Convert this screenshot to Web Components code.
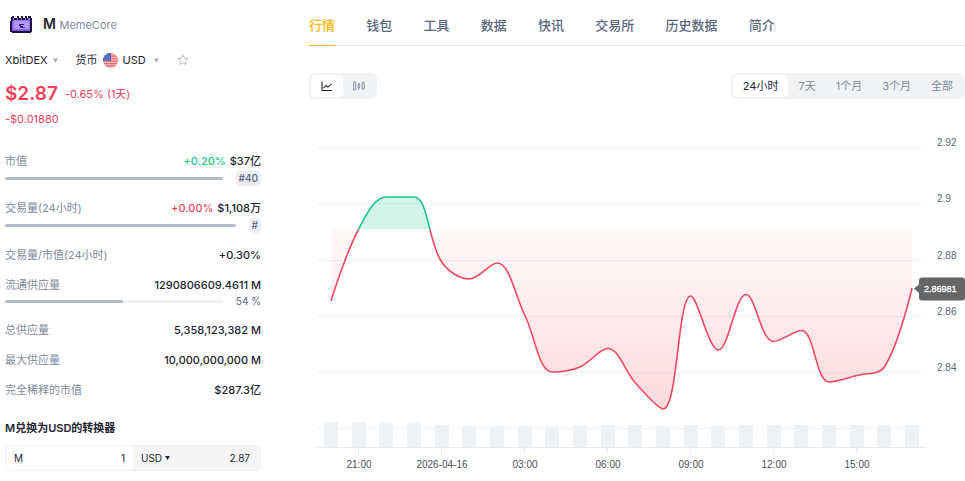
<!DOCTYPE html>
<html lang="zh-CN">
<head>
<meta charset="utf-8">
<meta name="viewport" content="width=device-width, initial-scale=1">
<title>MemeCore (M)</title>
<style>
  body {
    margin: 0;
    background: #fff;
    color: #222531;
    font-family: Inter, "Noto Sans CJK SC", sans-serif;
    font-size: 11px;
    line-height: 16px;
  }
</style>
</head>
<body>
<coin-page>
  <coin-title slot="side" symbol="M">MemeCore</coin-title>
  <market-picker slot="side"></market-picker>
  <coin-price slot="side" price="$2.87" percent="-0.65% (1天)" change="-$0.01880"></coin-price>
  <stat-list slot="side">
    <stat-row label="市值" delta="+0.20%" trend="up" bar="100" badge="#40">$37亿</stat-row>
    <stat-row label="交易量(24小时)" delta="+0.00%" trend="down" bar="100" badge="#">$1,108万</stat-row>
    <stat-row label="交易量/市值(24小时)">+0.30%</stat-row>
    <stat-row label="流通供应量" bar="54" note="54 %">1290806609.4611 M</stat-row>
    <stat-row label="总供应量">5,358,123,382 M</stat-row>
    <stat-row label="最大供应量">10,000,000,000 M</stat-row>
    <stat-row label="完全稀释的市值">$287.3亿</stat-row>
  </stat-list>
  <coin-converter slot="side" rate="2.87"></coin-converter>

  <tab-bar>
    <a href="#market" aria-current="page">行情</a>
    <a href="#wallet">钱包</a>
    <a href="#tools">工具</a>
    <a href="#data">数据</a>
    <a href="#news">快讯</a>
    <a href="#exchange">交易所</a>
    <a href="#history">历史数据</a>
    <a href="#about">简介</a>
  </tab-bar>
  <chart-toolbar></chart-toolbar>
  <price-chart></price-chart>
</coin-page>

<script>
function attach(el, html) {
  const root = el.attachShadow({ mode: 'open' });
  root.innerHTML = html;
  return root;
}

const CARET = '<svg class="caret" viewBox="0 0 6 5" aria-hidden="true"><path d="M0 0h6L3 5z" fill="currentColor"/></svg>';

class CoinPage extends HTMLElement {
  constructor() {
    super();
    attach(this, `
    <style>
      :host {
        display: grid;
        grid-template-columns: 256px minmax(0, 1fr);
        column-gap: 48px;
        padding-left: 5px;
      }
      aside, main { min-width: 0; }
    </style>
    <aside><slot name="side"></slot></aside>
    <main><slot></slot></main>`);
  }
}

class CoinTitle extends HTMLElement {
  connectedCallback() {
    if (this.shadowRoot) return;
    attach(this, `
    <style>
      :host { display: flex; align-items: center; gap: 11px; padding: 12px 0 0 5px; height: 24px; }
      svg { width: 22px; height: 19px; flex: none; }
      h1 { margin: 0; font-size: 14px; line-height: 22px; font-weight: 600; }
      span { font-size: 11px; font-weight: 400; color: #808a9d; }
    </style>
    <svg viewBox="0 0 22 19" shape-rendering="crispEdges" aria-hidden="true">
      <path d="M2 1h2v2h3V1h2v2h2V1h2v2h2V1h2v2h1V1h3v2h1v14h-1v1H2v-1H0V6h1V2h1z" fill="#1b1140"/>
      <path d="M3 3h1v2h3V3h1v2h3V3h1v2h3V3h1v2h2V3h2v13H2V6h1z" fill="#8f6cf0"/>
      <path d="M4 6h15v8H4z" fill="#b095ff"/>
      <path d="M3 15h17v1H3z" fill="#7550dc"/>
      <path d="M10 9h4v1h-3v1h2v1h-2v1h3v0h-4z" fill="#2d1a68"/>
      <path d="M9 9h1v4h5v-1h-5z" fill="#4c329b"/>
    </svg>
    <h1>${this.getAttribute('symbol')} <span><slot></slot></span></h1>`);
  }
}

class MarketPicker extends HTMLElement {
  constructor() {
    super();
    attach(this, `
    <style>
      :host { display: flex; align-items: center; height: 24px; margin-top: 12px; }
      label { display: flex; align-items: center; gap: 5px; }
      .currency { margin-left: 18px; }
      select {
        appearance: none;
        field-sizing: content;
        margin: 0;
        padding: 0;
        border: 0;
        background: none;
        color: inherit;
        font: inherit;
        cursor: pointer;
      }
      .flag { width: 15px; height: 15px; }
      .caret { width: 5px; height: 5px; color: #a1a7b3; }
      .currency select { padding-right: 3px; }
      button { display: flex; margin: 0 0 0 18px; padding: 0; border: 0; background: none; cursor: pointer; }
      .star { width: 12px; height: 12px; }
    </style>
    <label>
      <select aria-label="交易所"><option>XbitDEX</option></select>${CARET}
    </label>
    <label class="currency">
      <span>货币</span>
      <svg class="flag" viewBox="0 0 15 15" aria-hidden="true">
        <clipPath id="round"><circle cx="7.5" cy="7.5" r="7.5"/></clipPath>
        <g clip-path="url(#round)">
          <path d="M0 0h15v15H0z" fill="#f3c8cb"/>
          <path d="M0 .5h15M0 3h15M0 5.5h15M0 8h15M0 10.5h15M0 13h15" stroke="#ee6b72" stroke-width="1.4"/>
          <path d="M0 0h8v8H0z" fill="#4a66b5"/>
          <path d="M1 3h6M1 5h6M1 7h6" stroke="#b4c0e2" stroke-width=".6" stroke-dasharray=".7 1"/>
        </g>
      </svg>
      <select><option>USD</option><option>EUR</option><option>CNY</option></select>${CARET}
    </label>
    <button type="button" aria-label="收藏">
      <svg class="star" viewBox="0 0 12 12" aria-hidden="true">
        <path d="M6 1l1.5 3.2 3.5.5-2.5 2.4.6 3.5L6 8.9l-3.1 1.7.6-3.500L1 4.700l3.500-.5z" fill="none" stroke="#b4b8c0" stroke-linejoin="round"/>
      </svg>
    </button>`);
  }
}

class CoinPrice extends HTMLElement {
  connectedCallback() {
    if (this.shadowRoot) return;
    attach(this, `
    <style>
      :host { display: block; margin-top: 8px; color: #f03f58; }
      div { display: flex; align-items: center; gap: 7px; }
      strong { font-size: 19px; line-height: 28px; font-weight: 600; }
      p { margin: 3px 0 1px; }
    </style>
    <div><strong>${this.getAttribute('price')}</strong><span>${this.getAttribute('percent')}</span></div>
    <p>${this.getAttribute('change')}</p>`);
  }
}

class StatList extends HTMLElement {
  constructor() {
    super();
    attach(this, `
    <style>
      :host { display: flex; flex-direction: column; gap: 14px; margin-top: 26px; }
    </style>
    <slot></slot>`);
  }
}

class StatRow extends HTMLElement {
  connectedCallback() {
    if (this.shadowRoot) return;
    const get = name => this.getAttribute(name) || '';
    const badge = get('badge');
    const tag = badge ? `<b>${badge}</b>` : `<small>${get('note')}</small>`;
    attach(this, `
    <style>
      :host { display: block; }
      .line { display: flex; justify-content: space-between; gap: 8px; }
      .label { color: #808a9d; }
      .value { font-weight: 500; }
      .up { color: #16c784; }
      .down { color: #f03f58; }
      .up, .down { margin-right: 1px; }
      .meter { display: flex; align-items: center; gap: 13px; height: 16px; margin-top: 1px; }
      .meter.plain { height: 14px; }
      .track { flex: 1; height: 3px; border-radius: 2px; background: #eff2f5; overflow: hidden; }
      .fill { height: 100%; background: #b5bbc9; }
      b {
        padding: 0 3px;
        border-radius: 4px;
        background: #eceef2;
        color: #58667e;
        font-size: 10px;
        line-height: 15px;
        font-weight: 500;
      }
      small { color: #58667e; font-size: 10px; line-height: 14px; }
    </style>
    <div class="line">
      <span class="label">${get('label')}</span>
      <span class="value">${get('delta') ? `<span class="${get('trend')}">${get('delta')}</span> ` : ''}<slot></slot></span>
    </div>
    ${get('bar') ? `<div class="meter ${badge ? '' : 'plain'}">
      <div class="track"><div class="fill" style="width:${get('bar')}%"></div></div>${tag}
    </div>` : ''}`);
  }
}

class CoinConverter extends HTMLElement {
  connectedCallback() {
    if (this.shadowRoot) return;
    const rate = Number(this.getAttribute('rate'));
    const root = attach(this, `
    <style>
      :host { display: block; margin-top: 22px; }
      h2 { margin: 0 0 9px; font-size: 11px; line-height: 16px; font-weight: 600; }
      .box {
        display: grid;
        grid-template-columns: 1fr 1fr;
        box-sizing: border-box;
        height: 26px;
        border: 1px solid #eff2f5;
        border-radius: 4px;
        overflow: hidden;
        font-size: 10px;
      }
      .side { display: flex; align-items: center; gap: 3px; padding: 0 8px; min-width: 0; }
      .to { background: #f5f5f6; padding-right: 10px; }
      input, select { margin: 0; padding: 0; border: 0; background: none; color: inherit; font: inherit; }
      select { appearance: none; field-sizing: content; }
      input { flex: 1; min-width: 0; text-align: right; outline: 0; }
      .caret { width: 5px; height: 4px; }
    </style>
    <h2>M兑换为USD的转换器</h2>
    <div class="box">
      <div class="side"><label for="from">M</label><input id="from" value="1" inputmode="decimal"></div>
      <div class="side to">
        <select aria-label="货币"><option>USD</option></select>${CARET}
        <input id="to" aria-label="USD" value="${rate}" inputmode="decimal">
      </div>
    </div>`);
    const from = root.querySelector('#from');
    const to = root.querySelector('#to');
    from.addEventListener('input', () => { to.value = (Number(from.value) * rate || 0).toFixed(2); });
    to.addEventListener('input', () => { from.value = (Number(to.value) / rate || 0).toFixed(4); });
  }
}

class TabBar extends HTMLElement {
  constructor() {
    super();
    attach(this, `
    <style>
      :host { display: block; padding-top: 9px; box-shadow: inset 0 -1px #e4e7eb; }
      nav { display: flex; justify-content: space-between; width: 71%; }
      ::slotted(a) {
        padding: 8px 0 11px;
        border-bottom: 1px solid transparent;
        color: #58667e;
        font-size: 13px;
        line-height: 17px;
        font-weight: 500;
        text-decoration: none;
        white-space: nowrap;
      }
      ::slotted(a[aria-current]) { color: #f0b90b; border-bottom: 1px solid #f0b90b; }
    </style>
    <nav><slot></slot></nav>`);
  }
}

class ChartToolbar extends HTMLElement {
  constructor() {
    super();
    const root = attach(this, `
    <style>
      :host { display: flex; justify-content: space-between; margin-top: 27px; }
      div { display: flex; padding: 2px; border-radius: 6px; background: #f0f2f4; }
      button {
        display: flex;
        align-items: center;
        justify-content: center;
        height: 22px;
        margin: 0;
        padding: 0 10px;
        border: 0;
        border-radius: 5px;
        background: none;
        color: #808a9d;
        font: inherit;
        cursor: pointer;
      }
      button[aria-pressed="true"] { background: #fff; color: #222531; }
      svg { width: 12px; height: 12px; }
    </style>
    <div>
      <button type="button" aria-label="折线图" aria-pressed="true">
        <svg viewBox="0 0 12 12" fill="none" stroke="currentColor" stroke-width="1.1"><path d="M1 1.500v9h10M2.500 8.200l2.500-2.700 2 1.600 3.600-3.300"/></svg>
      </button>
      <button type="button" aria-label="K线图" aria-pressed="false">
        <svg viewBox="0 0 12 12" fill="none" stroke="currentColor" stroke-width=".9"><path d="M.700 2h2v8h-2zM9.200 2.500h2V9h-2zM10.200 1.500v1M10.200 9v1M5 4.500h1.700v3H5zM5.900 2.500v2M5.900 7.500V10"/></svg>
      </button>
    </div>
    <div>
      <button type="button" aria-pressed="true">24小时</button>
      <button type="button" aria-pressed="false">7天</button>
      <button type="button" aria-pressed="false">1个月</button>
      <button type="button" aria-pressed="false">3个月</button>
      <button type="button" aria-pressed="false">全部</button>
    </div>`);
    root.querySelectorAll('div').forEach(group => {
      group.addEventListener('click', e => {
        const hit = e.target.closest('button');
        if (!hit) return;
        group.querySelectorAll('button').forEach(b => b.setAttribute('aria-pressed', b === hit));
      });
    });
  }
}

// hourly prices, as heights on the plot
const LINE = [191, 119, 87, 87, 152, 169, 153, 205, 262, 257, 238.5, 273, 299, 186, 240, 184.5, 231.5, 220.5, 272, 265.5, 257, 178];
const VOLUME = [25, 25, 24, 24, 22, 21, 21, 21, 21, 21, 22, 22, 21, 22, 21, 22, 22, 22, 22, 22, 22, 22];
const TIMES = ['21:00', '2026-04-16', '03:00', '06:00', '09:00', '12:00', '15:00'];
const PRICES = ['2.92', '2.9', '2.88', '2.86', '2.84'];
const BASE = 119.5;
const FLOOR = 337;
const LEFT = 22;
const STEP = 27.67;
const SMOOTH = 0.36;

// bezier through all the points that never overshoots a neighbour
function smoothPath(pts) {
  const clamp = (v, a, b) => Math.max(Math.min(v, Math.max(a, b)), Math.min(a, b));
  let d = `M${pts[0]}`;
  let c0 = pts[0];
  for (let i = 1; i < pts.length; i++) {
    const p = pts[i - 1];
    const q = pts[i];
    const n = pts[i + 1];
    let c1 = q;
    let next = q;
    if (n) {
      const prevLen = Math.hypot(q[0] - p[0], q[1] - p[1]);
      const nextLen = Math.hypot(n[0] - q[0], n[1] - q[1]);
      const ratio = nextLen / (nextLen + prevLen);
      next = q.map((v, k) => clamp(v + (n[k] - p[k]) * SMOOTH * ratio, n[k], v));
      c1 = q.map((v, k) => clamp(v - (next[k] - v) * prevLen / nextLen, p[k], v));
      next = q.map((v, k) => v + (v - c1[k]) * nextLen / prevLen);
    }
    d += `C${c0} ${c1} ${q}`;
    c0 = next;
  }
  return d;
}

class PriceChart extends HTMLElement {
  constructor() {
    super();
    const pts = LINE.map((y, i) => [LEFT + i * STEP, y]);
    const line = smoothPath(pts);
    const end = pts[pts.length - 1];
    const area = `${line}L${end[0]} ${BASE}L${LEFT} ${BASE}Z`;
    const grid = PRICES.map((p, i) => {
      const y = 37 + i * 56.3;
      return `<path class="grid" d="M8 ${Math.round(y) + .5}H617"/><text x="628" y="${Math.round(y - 1)}">${p}</text>`;
    }).join('');
    const bars = VOLUME.map((v, i) => `<rect class="bar" x="${Math.round(LEFT + i * STEP - 7)}" y="${FLOOR - v}" width="14" height="${v}"/>`).join('');
    const times = TIMES.map((t, i) => {
      const x = Math.round(LEFT + (1 + i * 3) * STEP);
      return `<path class="axis" d="M${x - .5} ${FLOOR}v7"/><text class="time" x="${x}" y="358">${t}</text>`;
    }).join('');
    attach(this, `
    <style>
      :host { display: block; margin-top: 11px; }
      svg { display: block; width: 100%; }
      text { font: 10px "Liberation Sans", Arial, sans-serif; fill: #58667e; }
      .time { text-anchor: middle; fill: #4b505c; }
      .grid { stroke: #f3f4f6; }
      .axis { stroke: #e8eaed; }
      .bar { fill: #eff2f5; }
      .line { fill: none; stroke-width: 1.600; stroke-linejoin: round; }
      .tip { fill: #666; }
      .tip-text { fill: #fff; font-size: 9px; stroke: #fff; stroke-width: .3; }
    </style>
    <svg viewBox="0 0 656 370" role="img" aria-label="价格走势">
      <defs>
        <clipPath id="above"><path d="M0 0h656v${BASE}H0z"/></clipPath>
        <clipPath id="below"><path d="M0 ${BASE}h656V370H0z"/></clipPath>
        <linearGradient id="fall" gradientUnits="userSpaceOnUse" x1="0" y1="${BASE}" x2="0" y2="299">
          <stop offset="0" stop-color="#f6465d" stop-opacity=".03"/>
          <stop offset="1" stop-color="#f6465d" stop-opacity=".2"/>
        </linearGradient>
      </defs>
      ${grid}
      <path class="grid" d="M8 318.500H617"/>
      ${bars}
      <path class="axis" d="M8 337.500H617"/>
      ${times}
      <path d="${area}" fill="#16c784" fill-opacity=".19" clip-path="url(#above)"/>
      <path d="${area}" fill="url(#fall)" clip-path="url(#below)"/>
      <path class="line" d="${line}" stroke="#16c784" clip-path="url(#above)"/>
      <path class="line" d="${line}" stroke="#f0485f" clip-path="url(#below)"/>
      <path class="tip" d="M605 178.500l5-4v-4a3 3 0 0 1 3-3h40a3 3 0 0 1 3 3v17a3 3 0 0 1-3 3h-40a3 3 0 0 1-3-3v-4.500z"/>
      <text class="tip-text" x="615" y="182">2.86981</text>
    </svg>`);
  }
}

customElements.define('coin-page', CoinPage);
customElements.define('coin-title', CoinTitle);
customElements.define('market-picker', MarketPicker);
customElements.define('coin-price', CoinPrice);
customElements.define('stat-list', StatList);
customElements.define('stat-row', StatRow);
customElements.define('coin-converter', CoinConverter);
customElements.define('tab-bar', TabBar);
customElements.define('chart-toolbar', ChartToolbar);
customElements.define('price-chart', PriceChart);
</script>
</body>
</html>
